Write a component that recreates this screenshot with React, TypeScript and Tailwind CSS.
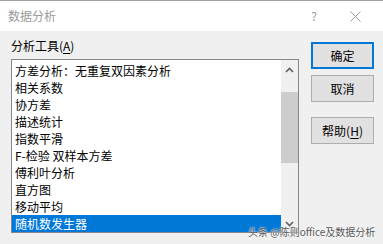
import React from "react";

const tools = [
  "方差分析：无重复双因素分析",
  "相关系数",
  "协方差",
  "描述统计",
  "指数平滑",
  "F-检验 双样本方差",
  "傅利叶分析",
  "直方图",
  "移动平均",
  "随机数发生器",
];

function Chevron({ up }: { up?: boolean }) {
  return (
    <svg width="9" height="6" viewBox="0 0 9 6">
      <path
        d={up ? "M1 5 L4.5 1.5 L8 5" : "M1 1 L4.5 4.5 L8 1"}
        fill="none"
        stroke="#606060"
        strokeWidth="1.6"
      />
    </svg>
  );
}

function DialogButton({ label, hotkey, primary }: { label: string; hotkey?: string; primary?: boolean }) {
  return (
    <div
      className={
        primary
          ? "h-[27px] w-[63px] flex items-center justify-center bg-[#e1e1e1] border-2 border-[#0078d7] text-[12px] leading-none text-black"
          : "h-[27px] w-[63px] flex items-center justify-center bg-[#e1e1e1] border border-[#adadad] text-[12px] leading-none text-black"
      }
    >
      {label}
      {hotkey && (
        <span>
          (<span className="underline underline-offset-2">{hotkey}</span>)
        </span>
      )}
    </div>
  );
}

export default function App() {
  const selected = 9;

  return (
    <div className="relative w-[383px] h-[244px] overflow-hidden bg-[#f0f0f0] font-['Noto_Sans_CJK_SC','Noto_Sans',sans-serif]">
      {/* title bar */}
      <div className="h-[31px] bg-white border-t border-[#a0a0a0] flex items-center text-[12px] text-[#9a9a9a]">
        <span className="ml-[8px]">数据分析</span>
        <span className="ml-auto mr-[33px]">?</span>
        <svg width="11" height="11" viewBox="0 0 11 11" className="mr-[22px]">
          <path d="M0.5 0.5 L10.5 10.5 M10.5 0.5 L0.5 10.5" stroke="#9a9a9a" strokeWidth="1" />
        </svg>
      </div>

      <div className="flex pl-[11px] pt-[6px]">
        {/* left column */}
        <div className="w-[288px] flex flex-col">
          <div className="h-[17px] leading-[17px] text-[12px] text-black">
            分析工具(<span className="underline underline-offset-2">A</span>)
          </div>
          <div className="mt-[5px] flex border border-[#828790] bg-white">
            <div className="flex-1 pt-[2px]">
              {tools.map((t, i) => (
                <div
                  key={t}
                  className={
                    i === selected
                      ? "h-[17px] leading-[17px] pl-[3px] text-[12px] whitespace-nowrap bg-[#0078d7] text-white"
                      : "h-[17px] leading-[17px] pl-[3px] text-[12px] whitespace-nowrap text-black"
                  }
                >
                  {t}
                </div>
              ))}
            </div>
            <div className="w-[17px] bg-[#f0f0f0] flex flex-col">
              <div className="h-[17px] flex items-center justify-center pt-[2px]">
                <Chevron up />
              </div>
              <div className="flex-1 pt-[15px]">
                <div className="h-[71px] bg-[#cdcdcd]" />
              </div>
              <div className="h-[17px] flex items-center justify-center">
                <Chevron />
              </div>
            </div>
          </div>
        </div>

        {/* buttons */}
        <div className="ml-[12px] mt-[5px] flex flex-col">
          <DialogButton label="确定" primary />
          <div className="mt-[6px]">
            <DialogButton label="取消" />
          </div>
          <div className="mt-[15px]">
            <DialogButton label="帮助" hotkey="H" />
          </div>
        </div>
      </div>

      {/* watermark */}
      <div className="absolute left-[248px] top-[225px] text-[10px] leading-[13px] text-[#555] whitespace-nowrap [text-shadow:0_0_2px_#fff,0_0_1px_#fff]">
        头条 @陈则office及数据分析
      </div>
    </div>
  );
}
